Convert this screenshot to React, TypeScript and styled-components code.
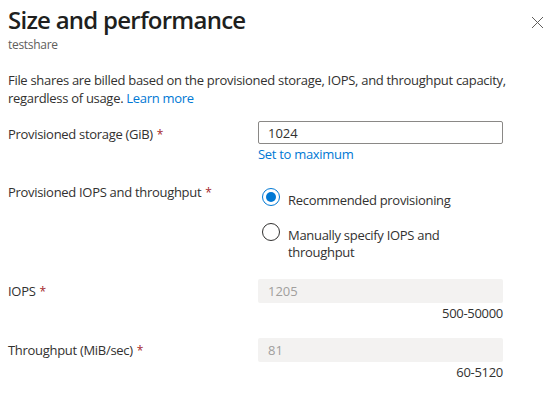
import React from "react";
import styled, { createGlobalStyle } from "styled-components";

const GlobalStyle = createGlobalStyle`
  html, body {
    margin: 0;
    padding: 0;
    background: #ffffff;
  }
  body {
    font-family: "Segoe UI", "Open Sans", "Noto Sans", sans-serif;
    color: #323130;
    letter-spacing: -0.3px;
    -webkit-font-smoothing: antialiased;
  }
`;

const Panel = styled.div`
  width: 560px;
  height: 394px;
  box-sizing: border-box;
  padding: 4px 57px 0 8px;
  position: relative;
  overflow: hidden;
`;

const Header = styled.div`
  display: flex;
  flex-direction: column;
`;

const Title = styled.h1`
  margin: 0;
  font-size: 24px;
  line-height: 32px;
  font-weight: 600;
  color: #201f1e;
  letter-spacing: -0.75px;
`;

const Subtitle = styled.div`
  font-size: 12px;
  line-height: 16px;
  color: #605e5c;
  margin-top: 1px;
`;

const CloseButton = styled.button`
  position: absolute;
  top: 14px;
  right: 15px;
  width: 16px;
  height: 16px;
  padding: 0;
  border: 0;
  background: transparent;
  display: flex;
  align-items: center;
  justify-content: center;
  cursor: pointer;
`;

const Description = styled.p`
  margin: 18px 0 0;
  font-size: 13px;
  line-height: 18px;
  width: 520px;
`;

const Link = styled.a`
  color: #0078d4;
  text-decoration: none;
  cursor: pointer;
`;

const FormRow = styled.div<{ $top: number }>`
  display: grid;
  grid-template-columns: 250px 245px;
  margin-top: ${(p) => p.$top}px;
`;

const Label = styled.label<{ $offset?: number }>`
  font-size: 13px;
  line-height: 18px;
  padding-top: ${(p) => p.$offset ?? 3}px;
`;

const Required = styled.span`
  color: #a4262c;
  font-size: 12px;
  margin-left: 4px;
`;

const Field = styled.div`
  display: flex;
  flex-direction: column;
`;

const TextInput = styled.input`
  box-sizing: border-box;
  height: 23px;
  width: 100%;
  border: 1px solid #8a8886;
  border-radius: 2px;
  padding: 0 9px;
  font: inherit;
  font-size: 13px;
  color: #323130;
  background: #ffffff;
  outline: none;
  &:disabled {
    height: 24px;
    border-color: transparent;
    background: #f3f2f1;
    color: #a19f9d;
  }
`;

const FieldLink = styled(Link)`
  font-size: 13px;
  line-height: 18px;
  margin-top: 1px;
`;

const RangeHint = styled.div`
  font-size: 13px;
  line-height: 18px;
  text-align: right;
  margin-top: 1px;
`;

const RadioGroup = styled.div`
  display: flex;
  flex-direction: column;
  gap: 14px;
  padding-top: 6px;
  padding-left: 4px;
`;

const RadioOption = styled.label`
  display: flex;
  align-items: flex-start;
  gap: 8px;
  font-size: 13px;
  line-height: 17px;
  cursor: pointer;
`;

const RadioCircle = styled.span<{ $checked?: boolean }>`
  flex: none;
  box-sizing: border-box;
  width: 18px;
  height: 18px;
  border-radius: 50%;
  border: 1px solid ${(p) => (p.$checked ? "#0078d4" : "#323130")};
  display: flex;
  align-items: center;
  justify-content: center;
  &::after {
    content: "";
    width: 10px;
    height: 10px;
    border-radius: 50%;
    background: ${(p) => (p.$checked ? "#0078d4" : "transparent")};
  }
`;

const RadioText = styled.span`
  padding-top: 4px;
  max-width: 170px;
`;

function CloseIcon() {
  return (
    <svg width="13" height="13" viewBox="0 0 13 13" fill="none">
      <path d="M1 1 L12 12 M12 1 L1 12" stroke="#605e5c" strokeWidth="1" />
    </svg>
  );
}

export default function App() {
  return (
    <>
      <GlobalStyle />
      <Panel>
        <Header>
          <Title>Size and performance</Title>
          <Subtitle>testshare</Subtitle>
        </Header>
        <CloseButton aria-label="Close">
          <CloseIcon />
        </CloseButton>

        <Description>
          File shares are billed based on the provisioned storage, IOPS, and
          throughput capacity, regardless of usage. <Link>Learn more</Link>
        </Description>

        <FormRow $top={14}>
          <Label $offset={4}>
            Provisioned storage (GiB)<Required>*</Required>
          </Label>
          <Field>
            <TextInput defaultValue="1024" />
            <FieldLink>Set to maximum</FieldLink>
          </Field>
        </FormRow>

        <FormRow $top={19}>
          <Label $offset={1}>
            Provisioned IOPS and throughput<Required>*</Required>
          </Label>
          <RadioGroup>
            <RadioOption>
              <RadioCircle $checked />
              <RadioText>Recommended provisioning</RadioText>
            </RadioOption>
            <RadioOption>
              <RadioCircle />
              <RadioText>Manually specify IOPS and throughput</RadioText>
            </RadioOption>
          </RadioGroup>
        </FormRow>

        <FormRow $top={18}>
          <Label $offset={3}>
            IOPS<Required>*</Required>
          </Label>
          <Field>
            <TextInput disabled value="1205" readOnly />
            <RangeHint>500-50000</RangeHint>
          </Field>
        </FormRow>

        <FormRow $top={16}>
          <Label $offset={3}>
            Throughput (MiB/sec)<Required>*</Required>
          </Label>
          <Field>
            <TextInput disabled value="81" readOnly />
            <RangeHint>60-5120</RangeHint>
          </Field>
        </FormRow>
      </Panel>
    </>
  );
}
